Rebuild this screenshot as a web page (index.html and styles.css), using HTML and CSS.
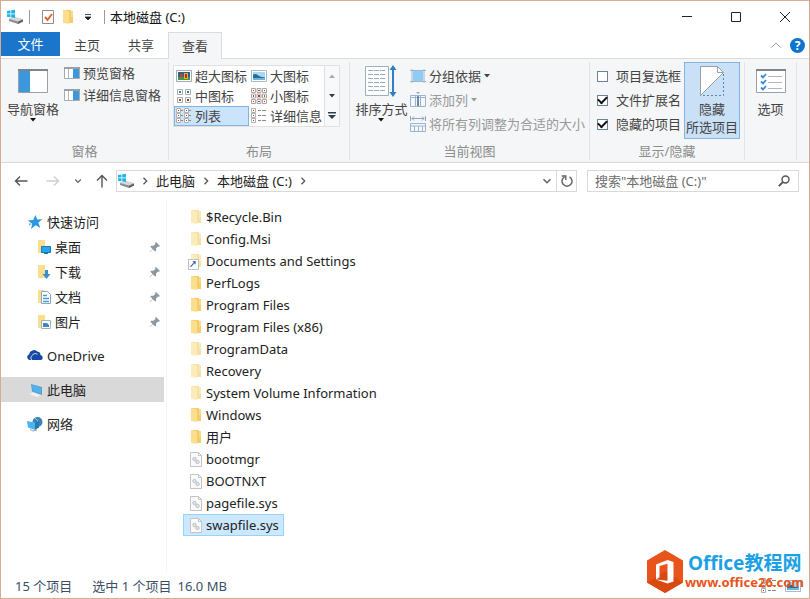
FILE: index.html
```
<!DOCTYPE html>
<html lang="zh-CN">
<head>
    <meta charset="utf-8">
    <title>本地磁盘 (C:)</title>
    <link rel="stylesheet" href="styles.css">
</head>
<body>
    <!-- shared icons -->
    <svg class="sprite" aria-hidden="true">
        <symbol id="drive" viewBox="0 0 16 16">
            <path d="M2 10l4-2 10 2.500v2l-5 2.500-9-3z" fill="#8b8f92"/>
            <path d="M2 10l4-2.500 10 2.500-5 2.500z" fill="#d5d8da"/>
            <path d="M11 13l5-2.500v2L11 15z" fill="#5f6366"/>
            <path d="M0 2l3.500-.6v3H0zM4.200 1.300L8 .7v3.700H4.200zM0 5.200h3.500v3L0 7.700zM4.200 5.200H8v3.700l-3.800-.6z" fill="#1fb4ea"/>
        </symbol>
        <symbol id="folder" viewBox="0 0 12 16">
            <path d="M1 1h8v7h2v6H1z" fill="#f3cd68"/>
            <path d="M1 1l6 1.500V15l-6-1z" fill="#fbdf8e"/>
            <path d="M9 2h2v6H9z" fill="#f8dc8c"/>
        </symbol>
        <symbol id="sysfile" viewBox="0 0 12 16">
            <path d="M.5 1.500h8l3 3v11H.5z" fill="#fbfbfb" stroke="#c4c4c4"/>
            <path d="M8.500 1.500v3h3" fill="none" stroke="#c4c4c4"/>
            <circle cx="4.500" cy="8" r="1.700" fill="#e3e7ea" stroke="#b9c0c6"/>
            <circle cx="7.500" cy="11" r="1.700" fill="#e3e7ea" stroke="#b9c0c6"/>
        </symbol>
        <symbol id="pin" viewBox="0 0 12 12">
            <path d="M7 1l4 4-1 .8-1-.3-2 2 .1 2.200-1 .8-2.300-2.300L.8 11.300l-.3-.3 3-3.100L1.300 5.600l1-.9 2.200.1 2-2L6 1.800z" fill="#8c979f"/>
        </symbol>
        <symbol id="chev-right" viewBox="0 0 8 8">
            <path d="M2.500.8L5.700 4 2.500 7.200" fill="none" stroke="#555" stroke-width="1.300"/>
        </symbol>
        <symbol id="chev-down" viewBox="0 0 10 8">
            <path d="M1.500 2.200L5 5.700l3.500-3.500" fill="none" stroke="#666" stroke-width="1.600"/>
        </symbol>
        <symbol id="caret" viewBox="0 0 6 4">
            <path d="M0 0h6L3 3.500z" fill="currentColor"/>
        </symbol>
        <symbol id="pane" viewBox="0 0 16 14">
            <path d="M.5 1.500h15v11H.5z" fill="#fff" stroke="#a3abb2"/>
            <path d="M0 1h16v2H0z" fill="#9aa2a9"/>
            <path d="M4.500 3v9" stroke="#a9b4bd"/>
            <path d="M9 3h6v9H9z" fill="#3d97dc"/>
        </symbol>
        <symbol id="details" viewBox="0 0 16 16">
            <path d="M.5.5h4v4h-4zM.5 5.500h4v4h-4zM.5 10.500h4v4h-4z" fill="#fff" stroke="#b5b0ac"/>
            <path d="M2 2h1v1H2zM2 12h1v1H2z" fill="#c33"/>
            <path d="M2 7h1v1H2z" fill="#27b"/>
            <path d="M7 2.500h3m1 0h4M7 7.500h3m1 0h4M7 12.500h3m1 0h4" stroke="#888"/>
        </symbol>
        <symbol id="picture" viewBox="0 0 16 16">
            <path d="M.5 2.500h15v11H.5z" fill="#fff" stroke="#a9bccb"/>
            <path d="M2 4h12v8H2z" fill="#a9d7f5"/>
            <path d="M2 6.500l3-.5 4 2.500 5 1V10H2z" fill="#276d8f"/>
            <path d="M2 10h12v2H2z" fill="#6fb3df"/>
        </symbol>
    </svg>

    <div class="window">
        <header class="titlebar">
            <svg class="icon16"><use href="#drive"/></svg>
            <span class="sep"></span>
            <button class="quick" aria-label="属性">
                <svg width="14" height="16" viewBox="0 0 14 16"><path d="M1.500 1.500h11v13h-11z" fill="#fff" stroke="#8c8c8c"/><path d="M4 8l2.500 3L11 5" fill="none" stroke="#e0622b" stroke-width="2"/></svg>
            </button>
            <button class="quick" aria-label="新建文件夹"><svg width="12" height="16"><use href="#folder"/></svg></button>
            <button class="quick" aria-label="自定义快速访问工具栏">
                <svg width="8" height="8" viewBox="0 0 8 8"><path d="M1 1.500h6M1 4h6L4 7z" stroke="#222" fill="#222" stroke-width=".8"/></svg>
            </button>
            <span class="sep"></span>
            <h1 class="title">本地磁盘 (C:)</h1>
            <div class="controls">
                <button aria-label="最小化"><svg width="12" height="12" viewBox="0 0 12 12"><path d="M1 5.500h10" stroke="#222"/></svg></button>
                <button aria-label="最大化"><svg width="12" height="12" viewBox="0 0 12 12"><path d="M1.500 1.500h9v9h-9z" fill="none" stroke="#222"/></svg></button>
                <button aria-label="关闭"><svg width="12" height="12" viewBox="0 0 12 12"><path d="M1 1l10 10M11 1L1 11" stroke="#222"/></svg></button>
            </div>
        </header>

        <nav class="tabs">
            <button class="tab tab-file">文件</button>
            <button class="tab">主页</button>
            <button class="tab">共享</button>
            <button class="tab tab-active">查看</button>
            <button class="tab-tool" aria-label="折叠功能区"><svg width="12" height="8" viewBox="0 0 12 8"><path d="M1.500 6.500L6 2l4.500 4.500" fill="none" stroke="#999"/></svg></button>
            <button class="help" aria-label="帮助">?</button>
        </nav>

        <section class="ribbon">
            <div class="group">
                <div class="group-body">
                    <button class="big">
                        <svg width="30" height="26" viewBox="0 0 30 26"><path d="M.5 1.500h29v23H.5z" fill="#fff" stroke="#9aa0a5"/><path d="M0 1h30v2H0z" fill="#7f868b"/><path d="M1 3h11v21H1z" fill="#3d97dc"/></svg>
                        <span>导航窗格</span>
                        <svg class="caret"><use href="#caret"/></svg>
                    </button>
                    <div class="stack stack-tight">
                        <button class="small"><svg class="icon16"><use href="#pane"/></svg>预览窗格</button>
                        <button class="small"><svg class="icon16"><use href="#pane"/></svg>详细信息窗格</button>
                    </div>
                </div>
                <div class="group-name">窗格</div>
            </div>

            <div class="group">
                <div class="group-body">
                    <div class="gallery">
                        <div class="gallery-items">
                            <button class="view"><svg class="icon16" viewBox="0 0 16 16"><path d="M.5 2.500h15v11H.5z" fill="#fff" stroke="#a4acb2"/><path d="M2 4h12v8H2z" fill="#2b5f8c"/><path d="M2 9h12v3H2z" fill="#3c9a42"/><path d="M4 6h3v3H4z" fill="#d23a32"/><path d="M8 5h4v6H8z" fill="#e9b42c"/><path d="M9 6h2v4H9z" fill="#b92d2d"/></svg>超大图标</button>
                            <button class="view"><svg class="icon16"><use href="#picture"/></svg>大图标</button>
                            <button class="view"><svg class="icon16" viewBox="0 0 16 16"><path d="M1.500 1.500h5v5h-5zM9.500 1.500h5v5h-5zM1.500 9.500h5v5h-5zM9.500 9.500h5v5h-5z" fill="#fff" stroke="#aaa"/><path d="M3 3h2v2H3z" fill="#3a9a62"/><path d="M11 3h2v2h-2z" fill="#2776b5"/><path d="M3 11h2v2H3z" fill="#c83c32"/><path d="M11 11h2v2h-2z" fill="#7c4026"/></svg>中图标</button>
                            <button class="view"><svg class="icon16" viewBox="0 0 16 16"><path d="M.5.5h4v4h-4zM6 .5h4v4H6zM11.500.5h4v4h-4zM.5 6h4v4h-4zM6 6h4v4H6zM11.500 6h4v4h-4zM.5 11.500h4v4h-4zM6 11.500h4v4H6zM11.500 11.500h4v4h-4z" fill="#fff" stroke="#b5a49c"/><path d="M2 2h1v1H2zM13 2h1v1h-1zM7 7h2v2H7zM2 13h1v1H2zM13 13h1v1h-1z" fill="#c33"/><path d="M7 2h2v1H7zM2 7h1v2H2zM13 7h1v2h-1zM7 13h2v1H7z" fill="#277ab0"/></svg>小图标</button>
                            <button class="view view-on"><svg class="icon16" viewBox="0 0 16 16"><path d="M.5.5h4v4h-4zM.5 5.500h4v4h-4zM.5 10.500h4v4h-4zM8.500.5h4v4h-4zM8.500 5.500h4v4h-4zM8.500 10.500h4v4h-4z" fill="#fff" stroke="#b5b0ac"/><path d="M2 2h1v1H2zM10 7h1v1h-1zM2 12h1v1H2z" fill="#c33"/><path d="M2 7h1v1H2zM10 2h1v1h-1zM10 12h1v1h-1z" fill="#27b"/><path d="M5 2.500h2M5 7.500h2M5 12.500h2M13 2.500h2M13 7.500h2M13 12.500h2" stroke="#888"/></svg>列表</button>
                            <button class="view"><svg class="icon16"><use href="#details"/></svg>详细信息</button>
                        </div>
                        <div class="gallery-scroll">
                            <button class="dim" aria-label="上一行"><svg class="caret flip"><use href="#caret"/></svg></button>
                            <button aria-label="下一行"><svg class="caret"><use href="#caret"/></svg></button>
                            <button aria-label="更多"><svg width="8" height="8" viewBox="0 0 8 8"><path d="M0 0h8v1.500H0zM0 3h8L4 7z" fill="#333f4c"/></svg></button>
                        </div>
                    </div>
                </div>
                <div class="group-name">布局</div>
            </div>

            <div class="group">
                <div class="group-body">
                    <button class="big big-sort">
                        <svg width="32" height="32" viewBox="0 0 32 32"><path d="M.5 1.500h23v29H.5z" fill="#fff" stroke="#9db0bd"/><path d="M3 5.500h18M3 9.500h18M3 13.500h18M3 17.500h18M3 21.500h18M3 25.500h18" stroke="#96aebf" stroke-dasharray="5 1"/><path d="M28 4v24" stroke="#2f7fc4" stroke-width="2"/><path d="M28 0l3.500 5h-7zM28 32l3.500-5h-7z" fill="#2f7fc4"/></svg>
                        <span>排序方式</span>
                        <svg class="caret"><use href="#caret"/></svg>
                    </button>
                    <div class="stack">
                        <button class="small"><svg class="icon16" viewBox="0 0 16 16"><path d="M2 1v14M14 1v14M0 2.500h16M0 13.500h16" stroke="#9db6c9"/><path d="M3 3h10v10H3z" fill="#8fcbf5"/></svg>分组依据<svg class="caret"><use href="#caret"/></svg></button>
                        <button class="small" disabled><svg class="icon16" viewBox="0 0 16 16"><path d="M.5 3.500h15v11H.5zM5.500 3v12M10.500 3v12M0 5.500h16" fill="#f4f8fd" stroke="#9bb4d0"/><path d="M8 4v10" stroke="#7089a6" stroke-width="2"/><path d="M6 0h4L8 2z" fill="#8aa"/></svg>添加列<svg class="caret"><use href="#caret"/></svg></button>
                        <button class="small" disabled><svg class="icon16" viewBox="0 0 16 16"><path d="M.5 0v5M15.500 0v5M2 2.500h12M4 .5l-2 2 2 2M12 .5l2 2-2 2" fill="none" stroke="#8aa3bf"/><path d="M.5 7.500h15v8H.5zM0 10h16M4.500 10v6M8.500 10v6M12.500 10v6" fill="#f4f8fd" stroke="#9bb4d0"/></svg>将所有列调整为合适的大小</button>
                    </div>
                </div>
                <div class="group-name">当前视图</div>
            </div>

            <div class="group">
                <div class="group-body">
                    <div class="stack stack-checks">
                        <label class="check"><input type="checkbox">项目复选框</label>
                        <label class="check"><input type="checkbox" checked>文件扩展名</label>
                        <label class="check"><input type="checkbox" checked>隐藏的项目</label>
                    </div>
                    <button class="big big-on">
                        <svg width="26" height="32" viewBox="0 0 26 32"><path d="M1.500 1.500h17l6 6L1.500 30.500z" fill="#fff"/><path d="M1.500 31V1.500h17l6 6L1.500 30.500M18.500 1.500v6h6" fill="none" stroke="#95a0a8"/><path d="M24.500 9v21.500H3" fill="none" stroke="#4f86bb" stroke-dasharray="2 2"/></svg>
                        <span>隐藏<br>所选项目</span>
                    </button>
                </div>
                <div class="group-name">显示/隐藏</div>
            </div>

            <div class="group">
                <div class="group-body">
                    <button class="big">
                        <svg width="30" height="26" viewBox="0 0 30 26"><path d="M.5 1.500h29v23H.5z" fill="#fff" stroke="#9aa0a5"/><path d="M0 1h30v2H0z" fill="#7f868b"/><path d="M5 7.500l2 2L10 6M5 13.500l2 2 3-3.500M5 19.500l2 2 3-3.500" fill="none" stroke="#3587cf" stroke-width="1.800"/><path d="M12 8.500h14M12 14.500h14M12 20.500h14" stroke="#b5b5b5"/></svg>
                        <span>选项</span>
                    </button>
                </div>
            </div>
        </section>

        <div class="address-row">
            <button class="nav-btn" aria-label="后退"><svg width="14" height="12" viewBox="0 0 14 12"><path d="M13.500 6H1.500M6 1.500L1.500 6 6 10.500" fill="none" stroke="#555" stroke-width="1.400"/></svg></button>
            <button class="nav-btn" aria-label="前进"><svg width="14" height="12" viewBox="0 0 14 12"><path d="M.5 6h12M8 1.500L12.500 6 8 10.500" fill="none" stroke="#d0d0d0" stroke-width="1.400"/></svg></button>
            <button class="nav-btn nav-recent" aria-label="最近浏览的位置"><svg width="8" height="8"><use href="#chev-down"/></svg></button>
            <button class="nav-btn" aria-label="上移"><svg width="12" height="14" viewBox="0 0 12 14"><path d="M6 13.500V1.500M1 6.500l5-5 5 5" fill="none" stroke="#555" stroke-width="1.400"/></svg></button>
            <div class="address">
                <svg class="icon16"><use href="#drive"/></svg>
                <svg class="crumb-sep"><use href="#chev-right"/></svg>
                <a href="#">此电脑</a>
                <svg class="crumb-sep"><use href="#chev-right"/></svg>
                <a href="#">本地磁盘 (C:)</a>
                <svg class="crumb-sep"><use href="#chev-right"/></svg>
                <button class="history" aria-label="以前的位置"><svg width="10" height="8"><use href="#chev-down"/></svg></button>
                <button class="refresh" aria-label="刷新"><svg width="12" height="12" viewBox="0 0 12 12"><path d="M3.500 1.800A5 5 0 1 0 8.500 1.800" fill="none" stroke="#666" stroke-width="1.500"/><path d="M.8 1h4v4" fill="none" stroke="#666" stroke-width="1.400"/></svg></button>
            </div>
            <div class="search">
                <input type="text" aria-label="搜索" placeholder='搜索"本地磁盘 (C:)"'>
                <svg width="12" height="12" viewBox="0 0 12 12"><circle cx="7.500" cy="4.500" r="3.500" fill="none" stroke="#555" stroke-width="1.400"/><path d="M5 7L.8 11.200" stroke="#555" stroke-width="1.800"/></svg>
            </div>
        </div>

        <div class="main">
            <nav class="sidebar">
                <a href="#" class="place"><svg class="icon16" viewBox="0 0 16 16"><path d="M8.500 1l1.700 4.600 5.300-.3-4.200 3.300 2 5.400-4.600-2.800L4 15l1.200-5.200L.8 6.400l5.300-.5z" fill="#2b97e0"/><path d="M2 9l3 1-3 2z" fill="#82c4ef"/></svg>快速访问</a>
                <a href="#" class="place sub"><svg class="icon14" viewBox="0 0 14 14"><path d="M1 0h7v13H1z" fill="#fbdf8e"/><path d="M4.500 6.500h9v6h-9z" fill="#2aa5ec" stroke="#167bbd"/><path d="M7 13h4" stroke="#167bbd" stroke-width="2"/></svg>桌面<svg class="pin"><use href="#pin"/></svg></a>
                <a href="#" class="place sub"><svg class="icon14" viewBox="0 0 14 14"><path d="M1 0h7v13H1z" fill="#fbdf8e"/><path d="M8 5h3v4h2.500L9.500 14l-4-5H8z" fill="#3b8ed6"/></svg>下载<svg class="pin"><use href="#pin"/></svg></a>
                <a href="#" class="place sub"><svg class="icon14" viewBox="0 0 14 14"><path d="M1 0h7v13H1z" fill="#fbdf8e"/><path d="M4.500 1.500h6l3 3v9h-9z" fill="#fff" stroke="#8ba7bb"/><path d="M6 5.500h4M6 8.500h6M6 11.500h6" stroke="#4a9ad4" stroke-width="1.500"/></svg>文档<svg class="pin"><use href="#pin"/></svg></a>
                <a href="#" class="place sub"><svg class="icon14" viewBox="0 0 14 14"><path d="M1 0h7v13H1z" fill="#fbdf8e"/><path d="M4.500 5.500h9v8h-9z" fill="#fff" stroke="#9eb2c0"/><path d="M6 8h4l2 2v2H6z" fill="#3c86b8"/></svg>图片<svg class="pin"><use href="#pin"/></svg></a>
                <a href="#" class="place root"><svg class="icon16" viewBox="0 0 16 16"><path d="M2.800 12A2.800 2.800 0 0 1 2 6.600 5 5 0 0 1 10.500 3.600a3.600 3.600 0 0 1 3 3.400A2.600 2.600 0 0 1 14 12z" fill="#1449a6"/><path d="M5 12a2.600 2.600 0 0 1 0-4.300A3.600 3.600 0 0 1 10.500 6.300" fill="none" stroke="#fff" stroke-width=".8"/></svg>OneDrive</a>
                <a href="#" class="place root place-on"><svg class="icon16" viewBox="0 0 16 16"><path d="M4 2l11 3v8L5 9.500z" fill="#5f9cc4"/><path d="M5 3l9 2.600v6L6 9z" fill="#4bb4ee"/><path d="M2 12l4-1.500 8 3L10 15z" fill="#eef2f5"/></svg>此电脑</a>
                <a href="#" class="place root"><svg class="icon16" viewBox="0 0 16 16"><circle cx="10.500" cy="6" r="5" fill="#3d82b5"/><path d="M8 2c3 2 4 5 3 9" fill="none" stroke="#a5d1ec"/><path d="M0 5l8 1.500V14L1 11.500z" fill="#4bb4ee"/><path d="M8 6.500l4-1.500v6.500L8 14z" fill="#2879ad"/><path d="M3 13.500l3 1.500 4-1" fill="none" stroke="#8ba7bb"/></svg>网络</a>
            </nav>

            <ul class="files">
                <li><a href="#" class="file hidden-item"><svg><use href="#folder"/></svg>$Recycle.Bin</a></li>
                <li><a href="#" class="file hidden-item"><svg><use href="#folder"/></svg>Config.Msi</a></li>
                <li><a href="#" class="file hidden-item shortcut"><svg><use href="#folder"/></svg>Documents and Settings</a></li>
                <li><a href="#" class="file"><svg><use href="#folder"/></svg>PerfLogs</a></li>
                <li><a href="#" class="file"><svg><use href="#folder"/></svg>Program Files</a></li>
                <li><a href="#" class="file"><svg><use href="#folder"/></svg>Program Files (x86)</a></li>
                <li><a href="#" class="file hidden-item"><svg><use href="#folder"/></svg>ProgramData</a></li>
                <li><a href="#" class="file hidden-item"><svg><use href="#folder"/></svg>Recovery</a></li>
                <li><a href="#" class="file hidden-item"><svg><use href="#folder"/></svg>System Volume Information</a></li>
                <li><a href="#" class="file"><svg><use href="#folder"/></svg>Windows</a></li>
                <li><a href="#" class="file"><svg><use href="#folder"/></svg>用户</a></li>
                <li><a href="#" class="file"><svg><use href="#sysfile"/></svg>bootmgr</a></li>
                <li><a href="#" class="file"><svg><use href="#sysfile"/></svg>BOOTNXT</a></li>
                <li><a href="#" class="file"><svg><use href="#sysfile"/></svg>pagefile.sys</a></li>
                <li><a href="#" class="file file-on"><svg><use href="#sysfile"/></svg>swapfile.sys</a></li>
            </ul>
        </div>

        <footer class="status">
            <span>15 个项目</span>
            <span class="picked">选中 1 个项目</span>
            <span>16.0 MB</span>
            <div class="modes">
                <button aria-label="详细信息"><svg class="icon16"><use href="#details"/></svg></button>
                <button aria-label="大图标"><svg class="icon16"><use href="#picture"/></svg></button>
            </div>
        </footer>

        <div class="brand">
            <svg width="38" height="44" viewBox="0 0 38 44"><path d="M19 0l18 10.500v22L19 43 1 32.500v-22z" fill="#e8541a"/><path d="M19 21.500l18 11L19 43 1 32.500z" fill="#d94a12"/><path d="M10 14.500L21.500 10l6 2v19.500l-6 2L10 29.500l11.500 1.300V13.800L13.500 16v11.300L10 29.500z" fill="#fff"/></svg>
            <div>
                <div class="brand-name">Office教程网</div>
                <div class="brand-url">www.office26.com</div>
            </div>
        </div>
    </div>
</body>
</html>
```

FILE: styles.css
```
* {
    box-sizing: border-box;
}
body {
    margin: 0;
    font-family: "Noto Sans", "Noto Sans CJK SC", sans-serif;
    font-size: 13px;
    line-height: 18px;
    color: #222;
}
button {
    font: inherit;
    color: inherit;
    background: none;
    border: none;
    padding: 0;
}
button, a, label {
    white-space: nowrap;
}
a {
    color: inherit;
    text-decoration: none;
}
svg {
    display: block;
    flex-shrink: 0;
}
.sprite {
    display: none;
}
.icon16 {
    width: 16px;
    height: 16px;
}
.icon14 {
    width: 14px;
    height: 14px;
}
.caret {
    width: 6px;
    height: 4px;
}
.flip {
    transform: rotate(180deg);
}
.window {
    position: relative;
    display: flex;
    flex-direction: column;
    min-height: 100vh;
    border: 1px solid #d8ab92;
    background: #fff;
}

/* title bar */
.titlebar {
    display: flex;
    align-items: center;
    height: 31px;
    padding-left: 6px;
}
.sep {
    width: 1px;
    height: 14px;
    margin: 0 5px 0 6px;
    background: #999;
}
.quick {
    display: flex;
    justify-content: center;
    width: 20px;
}
.titlebar .sep + .quick {
    margin-left: 3px;
}
.title {
    margin: 0;
    font-size: 13px;
    font-weight: normal;
    color: #111;
}
.controls {
    display: flex;
    margin-left: auto;
}
.controls button {
    display: flex;
    justify-content: center;
    width: 49px;
}

/* tabs */
.tabs {
    display: flex;
    align-items: center;
    height: 26px;
    padding-right: 4px;
    color: #444;
}
.tab {
    width: 54px;
    height: 26px;
}
.tab-file {
    align-self: flex-start;
    width: 59px;
    height: 24px;
    background: #1b76cb;
    color: #fff;
}
.tab-active {
    position: relative;
    z-index: 1;
    height: 27px;
    margin-bottom: -1px;
    background: #f5f6f7;
    border: 1px solid #dadbdc;
    border-bottom: none;
}
.tab-tool {
    margin-left: auto;
    margin-right: 8px;
}
.help {
    width: 15px;
    height: 15px;
    border-radius: 50%;
    background: #0f74d0;
    color: #fff;
    font-size: 12px;
    font-weight: bold;
    line-height: 15px;
}

/* ribbon */
.ribbon {
    display: grid;
    grid-template-columns: 168px 181px 240px 155px 52px;
    height: 105px;
    padding: 3px 0 2px;
    background: #f5f6f7;
    border-top: 1px solid #dadbdc;
    border-bottom: 1px solid #dadbdc;
    color: #444;
}
.group {
    display: flex;
    flex-direction: column;
    border-right: 1px solid #e2e3e4;
}
.group-body {
    display: flex;
    flex: 1;
    padding: 0 4px;
}
.group-name {
    text-align: center;
    color: #8c8c8c;
}
.big {
    display: flex;
    flex-direction: column;
    align-items: center;
    align-self: flex-start;
    width: 56px;
    height: 77px;
    padding-top: 6px;
}
.big span {
    margin-top: 6px;
}
.big .caret {
    color: #111;
}
.big-sort {
    padding-top: 3px;
}
.big-sort span {
    margin-top: 3px;
}
.big-on {
    padding-top: 2px;
    background: #c9e0f7;
    border: 1px solid #84b4e0;
}
.big-on span {
    margin-top: 3px;
}
.group:last-child .group-body {
    justify-content: center;
}
.stack {
    display: flex;
    flex-direction: column;
    gap: 6px;
    padding-top: 5px;
}
.stack-tight {
    gap: 4px;
    padding-top: 2px;
    margin-left: 3px;
}
.small {
    display: flex;
    align-items: center;
    gap: 3px;
    height: 18px;
}
.small:disabled {
    color: #999;
}
.big-sort + .stack {
    margin-left: 1px;
}
.check {
    display: flex;
    align-items: center;
    gap: 8px;
}
.stack-checks {
    margin-left: 3px;
    margin-right: 3px;
}
.check input {
    display: grid;
    place-items: center;
    width: 11px;
    height: 11px;
    margin: 0;
    appearance: none;
    background: #fff;
    border: 1px solid #6f8296;
}
.check input:checked::after {
    content: "";
    width: 7px;
    height: 4px;
    margin-bottom: 2px;
    border-left: 2px solid #111;
    border-bottom: 2px solid #111;
    transform: rotate(-45deg);
}
.gallery {
    display: flex;
    align-self: flex-start;
    margin-top: 3px;
    border: 1px solid #dfe1e3;
    background: #fff;
}
.gallery-items {
    display: grid;
    grid-template-columns: 75px 75px;
    grid-auto-rows: 20px;
}
.view {
    display: flex;
    align-items: center;
    gap: 3px;
    padding-left: 1px;
    border: 1px solid transparent;
}
.view-on {
    background: #cbe3fb;
    border-color: #84b4e0;
}
.gallery-scroll {
    display: grid;
    grid-auto-rows: 20px;
    width: 15px;
    border-left: 1px solid #dfe1e3;
    background: #f8f9fa;
    color: #333f4c;
}
.gallery-scroll button {
    display: grid;
    place-items: center;
}
.gallery-scroll .dim {
    color: #aaa;
}

/* address bar */
.address-row {
    display: flex;
    align-items: center;
    height: 36px;
    padding: 0 10px 0 4px;
}
.nav-btn {
    display: flex;
    justify-content: center;
    width: 32px;
}
.nav-recent {
    width: 18px;
}
.nav-recent + .nav-btn {
    width: 29px;
}
.address, .search {
    display: flex;
    align-items: center;
    height: 22px;
    border: 1px solid #d9d9d9;
}
.address {
    flex: 1;
    padding-left: 1px;
}
.crumb-sep {
    width: 8px;
    height: 8px;
    margin: 0 7px;
}
.history {
    margin-left: auto;
    margin-right: 4px;
}
.refresh {
    display: grid;
    place-items: center;
    align-self: stretch;
    width: 20px;
    border-left: 1px solid #d9d9d9;
}
.search {
    width: 212px;
    margin-left: 10px;
    padding: 0 8px 0 7px;
}
.search input {
    flex: 1;
    min-width: 0;
    padding: 0;
    border: none;
    outline: none;
    background: none;
    font: inherit;
}
.search input::placeholder {
    color: #6d6d6d;
}

/* folder tree and file list */
.main {
    display: flex;
    flex: 1;
}
.sidebar {
    width: 166px;
    padding: 10px 2px 0 0;
    border-right: 1px solid #f6f6f6;
}
.place {
    display: flex;
    align-items: center;
    gap: 4px;
    height: 25px;
    padding-left: 26px;
}
.sub {
    padding: 0 3px 0 36px;
}
.root {
    margin-top: 9px;
}
.place-on {
    background: #d9d9d9;
}
.pin {
    width: 12px;
    height: 12px;
    margin-left: auto;
}
.files {
    flex: 1;
    margin: 0;
    padding: 7px 0 0 16px;
    list-style: none;
}
.files li {
    display: flex;
}
.file {
    display: flex;
    align-items: center;
    gap: 4px;
    height: 22px;
    padding: 0 4px 0 6px;
    border: 1px solid transparent;
}
.file svg {
    width: 12px;
    height: 16px;
}
.hidden-item svg {
    opacity: 0.6;
}
.shortcut {
    position: relative;
}
.shortcut::before {
    content: "↗";
    position: absolute;
    left: 4px;
    bottom: 1px;
    z-index: 1;
    width: 9px;
    height: 9px;
    background: #fff;
    border: 1px solid #b8c4cf;
    color: #1c4f98;
    font-size: 8px;
    font-weight: bold;
    line-height: 7px;
}
.file-on {
    background: #cce8ff;
    border-color: #99d1ff;
}

/* status bar */
.status {
    display: flex;
    align-items: center;
    gap: 6px;
    height: 25px;
    padding: 0 8px 0 14px;
    color: #3a4f66;
}
.picked {
    margin-left: 14px;
}
.modes {
    display: flex;
    gap: 8px;
    margin-left: auto;
}

/* site mark over the lower right corner */
.brand {
    position: absolute;
    right: 5px;
    bottom: 4px;
    display: flex;
    align-items: center;
    gap: 1px;
}
.brand-name {
    padding-left: 3px;
    color: #1ba1e6;
    font-size: 19px;
    font-weight: bold;
    line-height: 20px;
}
.brand-url {
    color: #e8541a;
    font-size: 13px;
    font-weight: bold;
    line-height: 18px;
}
```
